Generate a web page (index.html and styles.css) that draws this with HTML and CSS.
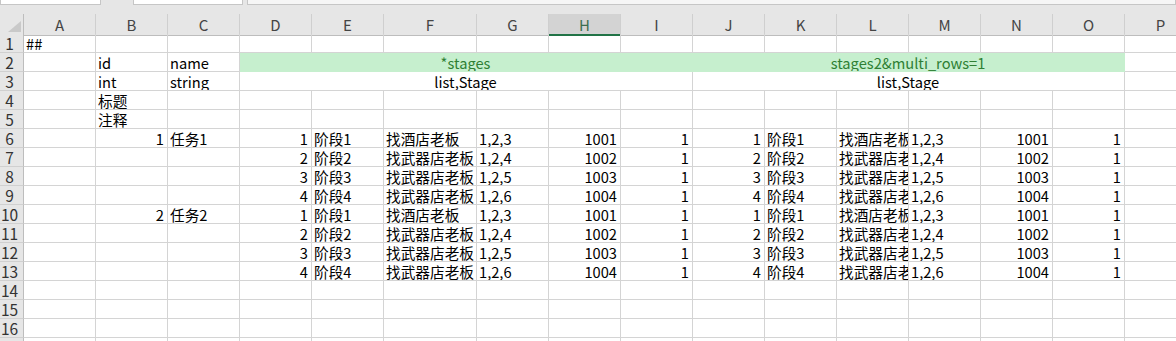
FILE: index.html
```html
<!DOCTYPE html>
<html lang="zh-CN">
  <head>
    <meta charset="UTF-8" />
    <title>Sheet1</title>
    <link rel="stylesheet" href="styles.css">
  </head>
  <body>
    <!-- name box / formula bar strip -->
    <div class="topbar">
      <div class="box name-box"></div>
      <div class="box fx-box"></div>
      <div class="box formula-box"></div>
    </div>

    <div class="sheet" id="sheet"></div>

    <script>
      const sheet = document.getElementById('sheet');
      const letters = 'ABCDEFGHIJKLMNOP'.split('');
      const activeCol = 'H';

      // one entry per row, cells from column A; {t, span, cls} for merged cells
      const rows = [
        ['##'],
        ['', 'id', 'name', { t: '*stages', span: 6, cls: 'good' }, { t: 'stages2&multi_rows=1', span: 6, cls: 'good' }],
        ['', 'int', 'string', { t: 'list,Stage', span: 6, cls: 'center' }, { t: 'list,Stage', span: 6, cls: 'center' }],
        ['', '标题'],
        ['', '注释'],
        ['', 1, '任务1', 1, '阶段1', '找酒店老板', '1,2,3', 1001, 1, 1, '阶段1', '找酒店老板', '1,2,3', 1001, 1],
        ['', '', '', 2, '阶段2', '找武器店老板', '1,2,4', 1002, 1, 2, '阶段2', '找武器店老板', '1,2,4', 1002, 1],
        ['', '', '', 3, '阶段3', '找武器店老板', '1,2,5', 1003, 1, 3, '阶段3', '找武器店老板', '1,2,5', 1003, 1],
        ['', '', '', 4, '阶段4', '找武器店老板', '1,2,6', 1004, 1, 4, '阶段4', '找武器店老板', '1,2,6', 1004, 1],
        ['', 2, '任务2', 1, '阶段1', '找酒店老板', '1,2,3', 1001, 1, 1, '阶段1', '找酒店老板', '1,2,3', 1001, 1],
        ['', '', '', 2, '阶段2', '找武器店老板', '1,2,4', 1002, 1, 2, '阶段2', '找武器店老板', '1,2,4', 1002, 1],
        ['', '', '', 3, '阶段3', '找武器店老板', '1,2,5', 1003, 1, 3, '阶段3', '找武器店老板', '1,2,5', 1003, 1],
        ['', '', '', 4, '阶段4', '找武器店老板', '1,2,6', 1004, 1, 4, '阶段4', '找武器店老板', '1,2,6', 1004, 1],
        [], [], [], []
      ];

      function el(tag, cls, text) {
        const node = document.createElement(tag);
        node.className = cls;
        if (text !== undefined && text !== '') node.textContent = text;
        return node;
      }

      // column letters
      const head = el('div', 'row head-row');
      head.appendChild(el('div', 'corner'));
      letters.forEach(l => {
        head.appendChild(el('div', l === activeCol ? 'col-head active' : 'col-head', l));
      });
      sheet.appendChild(head);

      rows.forEach((cells, i) => {
        const row = el('div', 'row');
        row.appendChild(el('div', 'row-head', i + 1));
        let col = 0;
        cells.forEach(c => {
          let cell;
          if (c !== null && typeof c === 'object') {
            cell = el('div', 'cell ' + c.cls, c.t);
            cell.style.gridColumn = 'span ' + c.span;
            col += c.span;
          } else {
            cell = el('div', typeof c === 'number' ? 'cell num' : 'cell', c);
            col += 1;
          }
          row.appendChild(cell);
        });
        while (col < letters.length) {
          row.appendChild(el('div', 'cell'));
          col++;
        }
        sheet.appendChild(row);
      });
    </script>
  </body>
</html>
```

FILE: styles.css
```css
body {
  margin: 0;
  font-family: "Noto Sans CJK SC", sans-serif;
  font-size: 14.67px;
  color: #000;
  background: #fff;
  overflow: hidden;
}

/* ----------- top strip ----------- */
.topbar {
  display: flex;
  height: 14px;
  background: #e6e6e6;
}
.box {
  height: 4px;
  background: #fff;
  border: 1px solid #c6c6c6;
  border-top: none;
}
.name-box {
  width: 99px;
  margin-right: 32px;
}
.fx-box {
  width: 108px;
  margin-right: 4px;
}
.formula-box {
  flex: 1;
  background: #f6f6f6;
}

/* ----------- grid ----------- */
.row {
  display: grid;
  /* row numbers, A-E, wide F, G-P */
  grid-template-columns: 24px repeat(5, 72px) 93px repeat(10, 72px);
  height: 19px;
}
.cell {
  box-sizing: border-box;
  border-right: 1px solid #d4d4d4;
  border-bottom: 1px solid #d4d4d4;
  padding: 1px 3px 0 2px;
  line-height: 18px;
  white-space: nowrap;
  overflow: hidden;
}
.cell.num {
  text-align: right;
}
.cell.center {
  text-align: center;
}
.cell.good {
  background: #c6efce;
  color: #2f7f34;
  text-align: center;
  border-color: #c6efce;
}

/* headers */
.head-row {
  height: 20px;
}
.corner,
.col-head,
.row-head {
  box-sizing: border-box;
  background: #e6e6e6;
  color: #444;
}
.corner {
  display: flex;
  justify-content: flex-end;
  align-items: flex-end;
  padding: 0 2px 3px 0;
  border-right: 1px solid #bdbdbd;
  border-bottom: 1px solid #bdbdbd;
}
.corner::after {
  content: "";
  border-left: 13px solid transparent;
  border-bottom: 11px solid #c9c9c9;
}
.col-head {
  text-align: center;
  line-height: 19px;
  border-right: 1px solid #cfcfcf;
  border-bottom: 1px solid #bdbdbd;
  font-size: 15px;
  padding-top: 1px;
}
.col-head.active {
  background: #d3d3d3;
  color: #3c6e50;
  border-bottom: 2px solid #217346;
}
.row-head {
  text-align: center;
  padding-right: 4px;
  line-height: 18px;
  font-size: 15.5px;
  border-right: 1px solid #bdbdbd;
  border-bottom: 1px solid #d0d0d0;
  color: #333;
}
```
